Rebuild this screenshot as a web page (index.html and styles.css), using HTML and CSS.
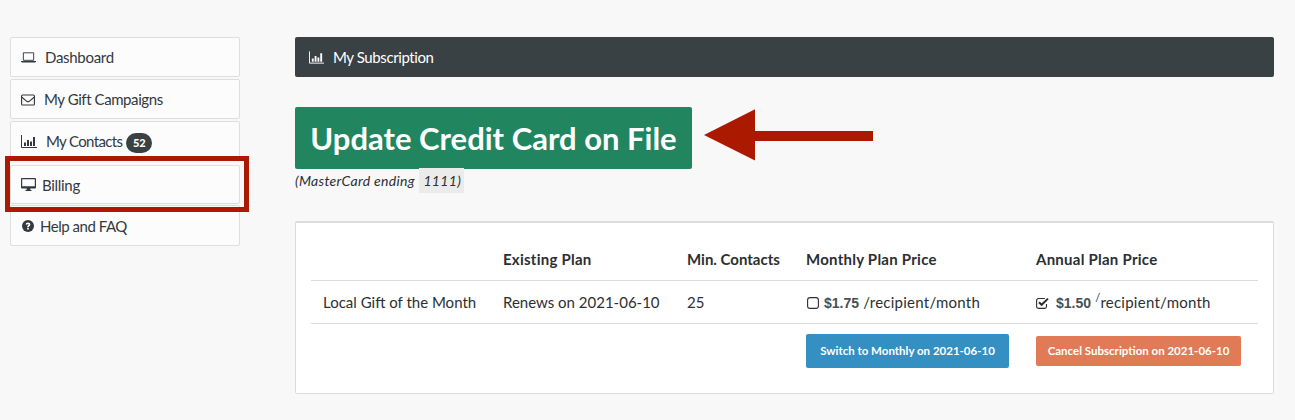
FILE: index.html
```html
<!DOCTYPE html>
<html lang="en">
<head>
<meta charset="utf-8">
<title>My Subscription</title>
<link rel="stylesheet" href="styles.css">
</head>
<body>
<svg class="sprites" width="0" height="0" aria-hidden="true">
  <symbol id="i-laptop" viewBox="0 0 16 11"><path d="M2.5 .5h11v8h-11z" fill="none" stroke="currentColor" stroke-width="1"/><path d="M0 9.2h16v.5l-1 1H1l-1-1z" fill="currentColor"/></symbol>
  <symbol id="i-env" viewBox="0 0 15 12"><rect x=".6" y=".6" width="13.8" height="10.8" rx="1.2" fill="none" stroke="currentColor" stroke-width="1.2"/><path d="M1 3l5.2 4.4q1.3 1 2.6 0L14 3" fill="none" stroke="currentColor" stroke-width="1.2"/></symbol>
  <symbol id="i-bars" viewBox="0 0 16 13"><path d="M.5 0v12.5H16" fill="none" stroke="currentColor"/><path d="M3 7.5h2V11H3zM6 5h2v6H6zM9 6.5h2V11H9zM12 2h2v9h-2z" fill="currentColor"/></symbol>
  <symbol id="i-desktop" viewBox="0 0 15 13"><path d="M1 0h13a1 1 0 0 1 1 1v8.5a1 1 0 0 1-1 1H9.2l.3 1.5h1v1H4.5v-1h1l.3-1.5H1a1 1 0 0 1-1-1V1a1 1 0 0 1 1-1zM1.2 1.3v6.9h12.6V1.3z" fill="currentColor" fill-rule="evenodd"/></symbol>
  <symbol id="i-help" viewBox="0 0 12 12"><circle cx="6" cy="6" r="6" fill="currentColor"/><path d="M3.6 4.6C3.7 3.3 4.7 2.5 6 2.5s2.4.8 2.4 2c0 1.5-1.6 1.4-1.6 2.7H5.1c0-1.9 1.5-1.8 1.5-2.6 0-.4-.3-.7-.7-.7s-.7.3-.8.9zM5.1 7.9h1.7v1.6H5.1z" fill="#fff"/></symbol>
  <symbol id="i-square" viewBox="0 0 12 12"><rect x=".6" y=".6" width="10.8" height="10.8" rx="2.4" fill="none" stroke="currentColor" stroke-width="1.1"/></symbol>
  <symbol id="i-check" viewBox="0 0 13 12"><path d="M10.5 7v2.6a1.8 1.8 0 0 1-1.8 1.8H2.4A1.8 1.8 0 0 1 .6 9.6V3.3a1.8 1.8 0 0 1 1.8-1.8h6.5" fill="none" stroke="currentColor" stroke-width="1.1"/><path d="M3 5.2l2.6 2.6L12 1.6" fill="none" stroke="currentColor" stroke-width="2"/></symbol>
</svg>

<div class="page">
  <nav class="sidebar">
    <a class="nav-item"><svg class="ico ico-laptop"><use href="#i-laptop"/></svg><span class="gap-dash">Dashboard</span></a>
    <a class="nav-item"><svg class="ico ico-env"><use href="#i-env"/></svg><span class="gap-gift">My Gift Campaigns</span></a>
    <a class="nav-item"><svg class="ico ico-bars"><use href="#i-bars"/></svg><span class="gap-cont">My Contacts</span><span class="badge">52</span></a>
    <a class="nav-item nav-billing"><svg class="ico ico-desktop"><use href="#i-desktop"/></svg><span class="gap-bill">Billing</span></a>
    <a class="nav-item nav-help"><svg class="ico ico-help"><use href="#i-help"/></svg><span class="gap-help">Help and FAQ</span></a>
    <div class="highlight"></div>
  </nav>

  <main class="content">
    <div class="title-bar"><svg class="ico ico-title"><use href="#i-bars"/></svg><span class="title-text">My Subscription</span></div>

    <div class="update">
      <a class="btn-update">Update Credit Card on File</a>
      <svg class="arrow" width="172" height="54" viewBox="0 0 172 54"><path d="M1 26L52 .3V22h118v10H52v19.5z" fill="#ab1a00"/></svg>
      <p class="card-note">(MasterCard ending <code class="card-num">1111)</code></p>
    </div>

    <section class="panel">
      <table class="plans">
        <colgroup><col class="c1"><col class="c2"><col class="c3"><col class="c4"><col class="c5"></colgroup>
        <thead>
          <tr><th></th><th>Existing Plan</th><th class="th-min">Min. Contacts</th><th>Monthly Plan Price</th><th>Annual Plan Price</th></tr>
        </thead>
        <tbody>
          <tr class="row">
            <td>Local Gift of the Month</td>
            <td>Renews on 2021-06-10</td>
            <td>25</td>
            <td class="unit"><svg class="ico ico-square"><use href="#i-square"/></svg><b class="price">$1.75</b> /recipient/month</td>
            <td class="unit"><svg class="ico ico-check"><use href="#i-check"/></svg><b class="price price-annual">$1.50</b> <sup class="slash">/</sup>recipient/month</td>
          </tr>
          <tr class="actions">
            <td></td><td></td><td></td>
            <td class="act-blue"><a class="btn btn-blue">Switch to Monthly on 2021-06-10</a></td>
            <td class="act-orange"><a class="btn btn-orange">Cancel Subscription on 2021-06-10</a></td>
          </tr>
        </tbody>
      </table>
    </section>
  </main>
</div>
</body>
</html>
```

FILE: styles.css
```css
* { box-sizing: border-box; }
html, body { margin: 0; padding: 0; }
body {
  background: #f8f8f8;
  color: #2b2f33;
  font-family: Lato, "Noto Sans", sans-serif;
  font-size: 15px;
  height: 420px;
  overflow: hidden;
}
.sprites { position: absolute; }
.page { display: flex; align-items: flex-start; padding: 37px 21px 0 10px; gap: 55px; }

.sidebar { position: relative; width: 230px; flex: none; display: flex; flex-direction: column; gap: 2px; letter-spacing: -.3px; }
.nav-item {
  display: flex; align-items: center;
  height: 40px; padding-left: 10px;
  background: #fcfcfc;
  border: 1px solid #dedede;
  border-radius: 2px;
  color: #33393e;
}
.nav-billing { margin-top: 2px; height: 39px; }
.nav-help { margin-top: -1px; height: 41px; }
.ico { flex: none; display: inline-block; }
.ico-laptop { width: 15px; height: 11px; }
.ico-env { width: 14px; height: 12px; margin-top: 1px; }
.ico-bars { width: 16px; height: 13px; }
.ico-desktop { width: 15px; height: 13px; }
.ico-help { width: 12px; height: 12px; margin-left: 1px; }
.gap-dash { margin-left: 9px; }
.gap-gift { margin-left: 9px; letter-spacing: -.42px; }
.gap-cont { margin-left: 9px; letter-spacing: -.65px; }
.gap-bill { margin-left: 6px; }
.gap-help { margin-left: 6px; letter-spacing: -.47px; }
.badge {
  margin: 4px 0 0 4px; width: 26px; height: 20px; line-height: 20px; text-align: center;
  border-radius: 10px; background: #3a4145; color: #fff;
  font-size: 11px; font-weight: 900; letter-spacing: 0;
}
.highlight {
  position: absolute; left: -5px; top: 119px; width: 244px; height: 56px;
  border: 5px solid #ab1a00; pointer-events: none;
}

.content { flex: 1; min-width: 0; }
.title-bar {
  display: flex; align-items: center; height: 40px; padding-left: 14px;
  background: #3a4145; color: #fff; border-radius: 2px;
}
.ico-title { width: 15px; height: 13px; margin-right: 9px; }
.title-text { letter-spacing: -.4px; }

.update { position: relative; margin-top: 30px; }
.btn-update {
  display: inline-block; width: 397px; height: 62px; line-height: 62px; text-align: center;
  background: #21865f; color: #fff; border-radius: 2px;
  font-size: 31px; font-weight: 700;
}
.arrow { position: absolute; left: 408px; top: 2px; }
.card-note { margin: 0; height: 22px; line-height: 23px; font-style: italic; font-size: 14px; letter-spacing: .3px; }
.card-num { font: inherit; background: #ebebeb; padding: 4px 3px 4px 4px; margin-left: 1px; }

.panel {
  margin-top: 30px; height: 173px; padding: 16px 15px 0;
  background: #fff; border: 1px solid #dcdcdc; border-top-width: 2px; border-radius: 2px;
}
.plans { width: 100%; border-collapse: collapse; table-layout: fixed; }
.c1 { width: 180px; } .c2 { width: 184px; } .c3 { width: 119px; } .c4 { width: 230px; }
.plans th, .plans td { padding: 0 12px; text-align: left; vertical-align: middle; white-space: nowrap; }
.plans th { height: 41px; font-weight: 700; letter-spacing: .25px; border-bottom: 1px solid #dcdcdc; }
.plans .th-min { letter-spacing: 0; }
.row td { height: 43px; border-bottom: 1px solid #dcdcdc; }
.row .unit { letter-spacing: .25px; }
.plans .act-blue { padding-top: 10px; vertical-align: top; }
.plans .act-orange { padding-top: 12px; vertical-align: top; }
.price {
  font-family: "Liberation Sans", sans-serif; font-weight: 700; font-size: 14px;
  letter-spacing: 0; color: #4a4f54; margin-left: 5px;
}
.price-annual { margin-left: 7px; }
.slash { font-size: 11px; line-height: 0; }
.ico-square { width: 12px; height: 12px; vertical-align: -1px; margin-left: 1px; }
.ico-check { width: 13px; height: 12px; vertical-align: -1px; }
.btn {
  display: inline-block; text-align: center; color: #fff; border-radius: 2px;
  font-size: 11.5px; font-weight: 700;
}
.btn-blue { width: 203px; height: 34px; line-height: 34px; background: #348fc3; }
.btn-orange { width: 205px; height: 30px; line-height: 30px; background: #e07a57; }
```
